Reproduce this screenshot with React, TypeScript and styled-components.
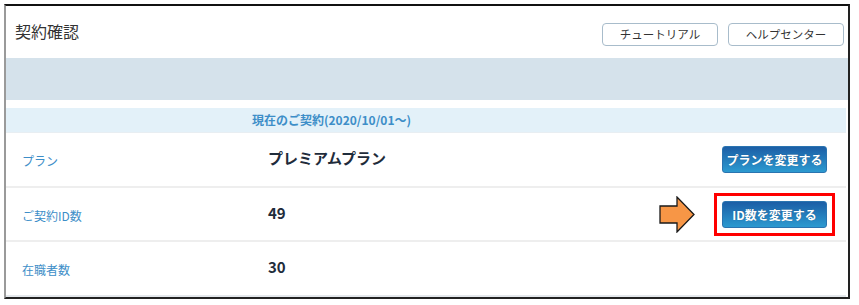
import React from "react";
import styled, { createGlobalStyle } from "styled-components";

const GlobalStyle = createGlobalStyle`
  html, body {
    margin: 0;
    padding: 0;
    background: #ffffff;
  }
  body {
    font-family: "Noto Sans CJK JP", "Noto Sans", sans-serif;
  }
`;

type Row = {
  label: string;
  value: string;
  action?: string;
  highlight?: boolean;
};

const rows: Row[] = [
  { label: "プラン", value: "プレミアムプラン", action: "プランを変更する" },
  { label: "ご契約ID数", value: "49", action: "ID数を変更する", highlight: true },
  { label: "在職者数", value: "30" },
];

function PointerArrow() {
  return (
    <ArrowSvg width="36" height="37" viewBox="0 0 36 37">
      <path
        d="M1 10 H18 V1 L35 18.5 L18 36 V27 H1 Z"
        fill="#f79646"
        stroke="#1a1a1a"
        strokeWidth="1.3"
        strokeLinejoin="miter"
      />
    </ArrowSvg>
  );
}

export default function App() {
  return (
    <>
      <GlobalStyle />
      <Frame>
        <Header>
          <Title>契約確認</Title>
          <HeaderActions>
            <GhostButton>チュートリアル</GhostButton>
            <GhostButton>ヘルプセンター</GhostButton>
          </HeaderActions>
        </Header>
        <Band />
        <SectionHead>現在のご契約(2020/10/01～)</SectionHead>
        {rows.map((row) => (
          <InfoRow key={row.label}>
            <Label>{row.label}</Label>
            <Value>{row.value}</Value>
            {row.action && (
              <Actions>
                {row.highlight && <PointerArrow />}
                <Highlight $on={row.highlight}>
                  <PrimaryButton>{row.action}</PrimaryButton>
                </Highlight>
              </Actions>
            )}
          </InfoRow>
        ))}
      </Frame>
    </>
  );
}

const Frame = styled.div`
  margin: 4px 0 0 4px;
  width: 846px;
  height: 295px;
  box-sizing: border-box;
  border-top: 2px solid #111;
  border-right: 2px solid #222;
  border-bottom: 2px solid #222;
  border-left: 2px solid #9a9a9a;
  display: flex;
  flex-direction: column;
  overflow: hidden;
`;

const Header = styled.div`
  height: 52px;
  flex: none;
  display: flex;
  align-items: center;
  justify-content: space-between;
  padding: 0 4px 0 9px;
`;

const Title = styled.h1`
  margin: 0;
  margin-top: -3px;
  font-size: 16px;
  font-weight: 400;
  color: #333;
`;

const HeaderActions = styled.div`
  display: flex;
  gap: 10px;
  margin-top: 5px;
`;

const GhostButton = styled.button`
  width: 116px;
  height: 23px;
  box-sizing: border-box;
  border: 1px solid #a8bccb;
  border-radius: 4px;
  background: #fff;
  color: #333;
  font-family: inherit;
  font-size: 11.5px;
  padding: 0;
  line-height: 21px;
`;

const Band = styled.div`
  height: 42px;
  flex: none;
  background: #d5e2eb;
  margin-bottom: 8px;
`;

const SectionHead = styled.div`
  height: 24px;
  flex: none;
  margin-right: 2px;
  background: #e3f1f9;
  border-bottom: 1px solid #e8eef2;
  color: #3d8ec8;
  font-size: 12px;
  font-weight: 700;
  line-height: 24px;
  padding-left: 246px;
`;

const InfoRow = styled.div`
  flex: 1;
  display: flex;
  align-items: center;
  padding: 0 19px 0 16px;
  border-bottom: 2px solid #eeeeee;
  margin-right: 2px;

  &:last-child {
    border-bottom-color: #e4e8ec;
  }
`;

const Label = styled.div`
  width: 246px;
  flex: none;
  font-size: 12px;
  color: #3d8ec8;
  padding-top: 2px;
`;

const Value = styled.div`
  flex: 1;
  font-size: 15px;
  font-weight: 700;
  color: #1f2c3b;
  margin-top: -4px;
`;

const Actions = styled.div`
  display: flex;
  align-items: center;
`;

const ArrowSvg = styled.svg`
  display: block;
  margin-right: 27px;
`;

const Highlight = styled.div<{ $on?: boolean }>`
  display: flex;
  outline: ${(p) => (p.$on ? "3px solid #ff0000" : "none")};
  outline-offset: 5px;
`;

const PrimaryButton = styled.button`
  width: 105px;
  height: 27px;
  box-sizing: border-box;
  border: 1px solid #2a74b0;
  border-radius: 3px;
  background: linear-gradient(#1c5ea6, #2c9ad0);
  color: #fff;
  font-family: inherit;
  font-size: 12px;
  font-weight: 700;
  padding: 0;
  line-height: 25px;
  text-shadow: 0 0 1px rgba(0, 0, 0, 0.3);
`;
